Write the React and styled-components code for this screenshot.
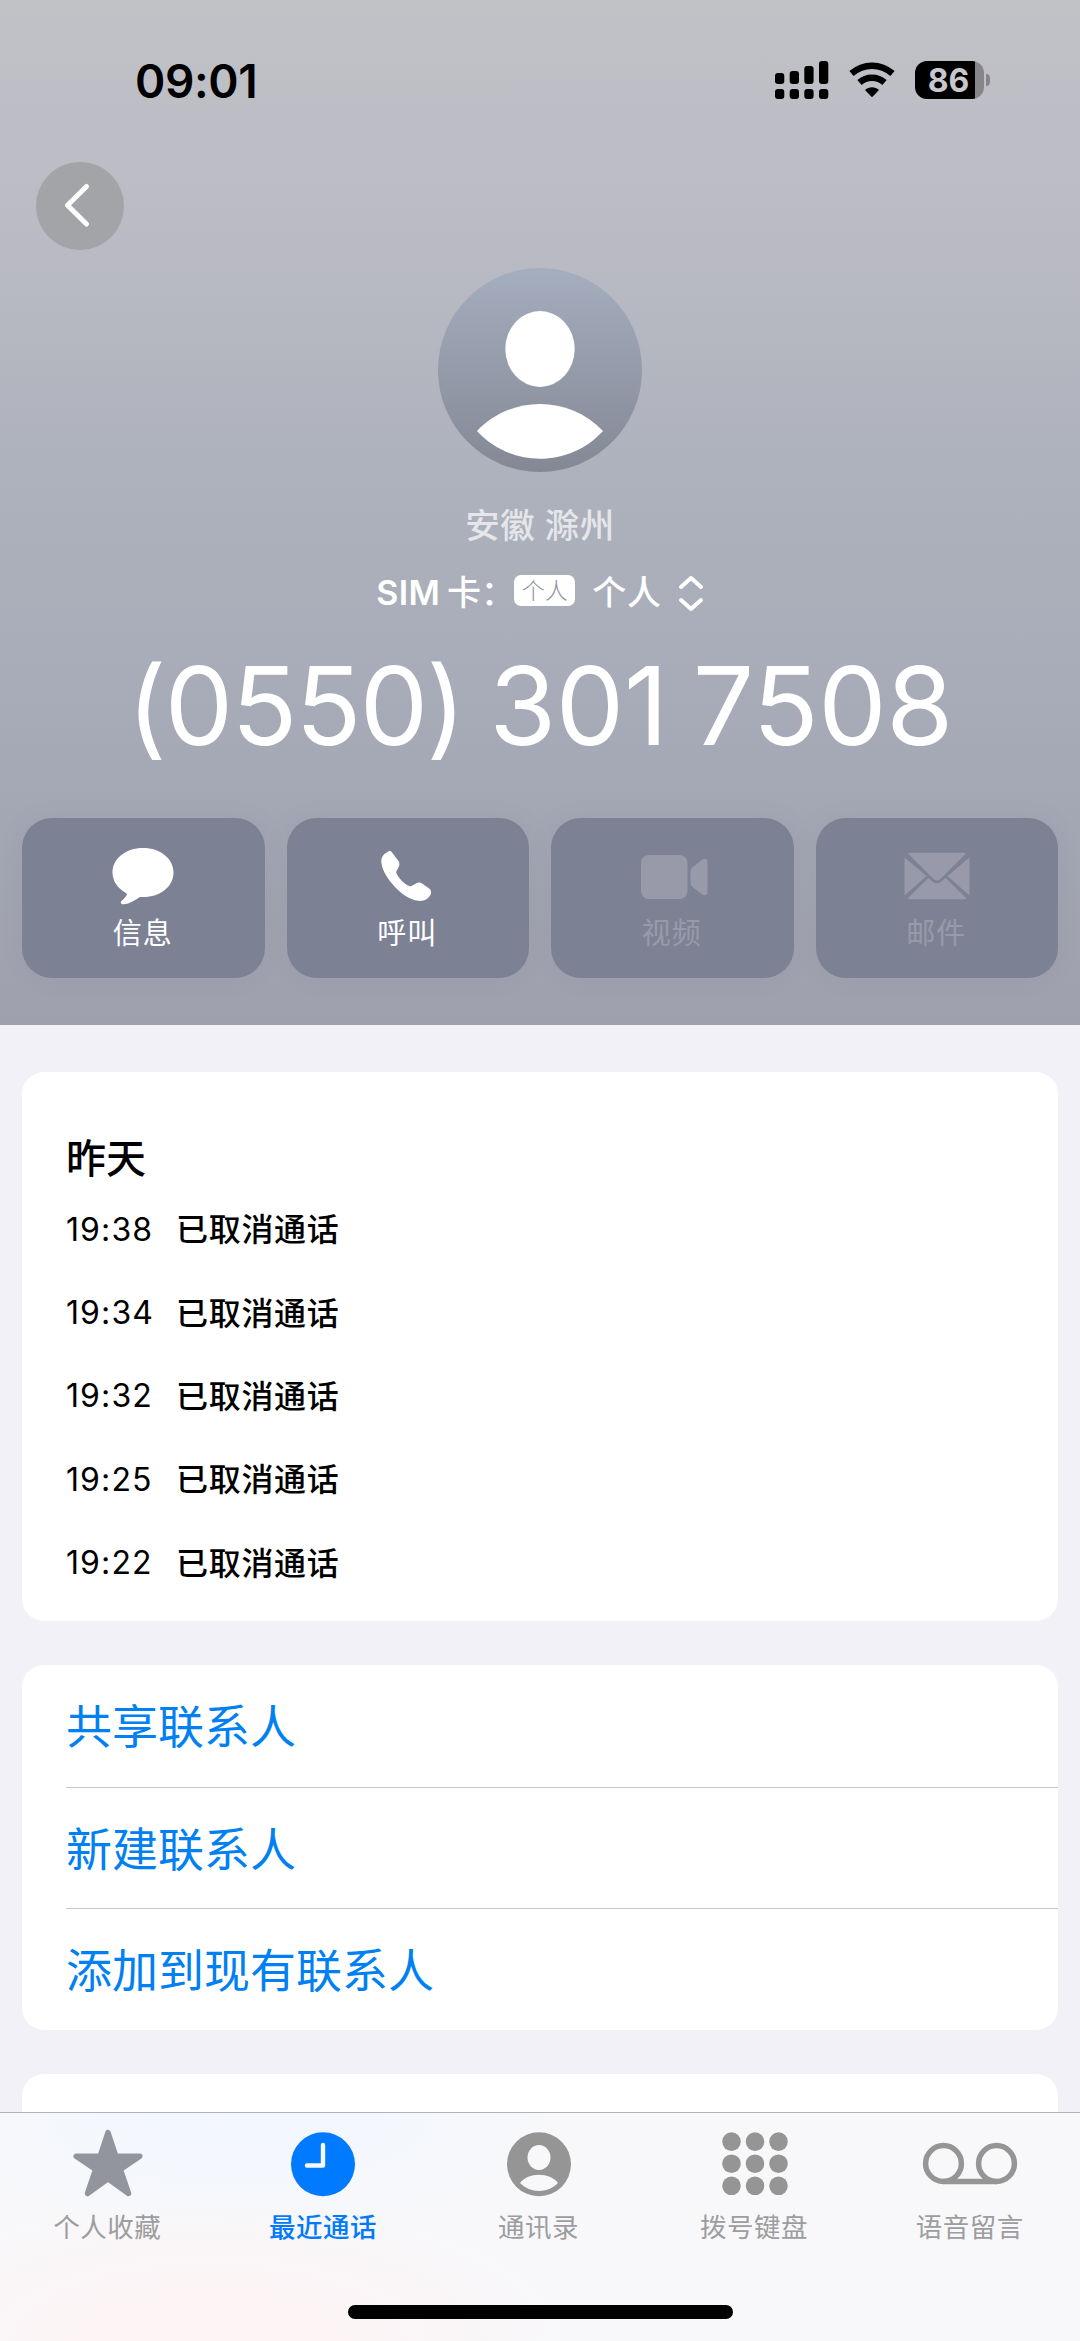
import React from 'react';
import styled, { createGlobalStyle } from 'styled-components';

const GlobalStyle = createGlobalStyle`
  * {
    box-sizing: border-box;
  }
  body {
    margin: 0;
    background-color: #f2f1f8;
    font-family: Inter, 'Noto Sans CJK SC', sans-serif;
  }
  svg {
    display: block;
    flex-shrink: 0;
  }
`;

const Screen = styled.div`
  display: flex;
  flex-direction: column;
  width: 1080px;
  height: 2341px;
  overflow: hidden;
  background-color: #f2f1f8;
`;
const Content = styled.div`
  flex: 1;
  min-height: 0;
  overflow: hidden;
`;

const Header = styled.div`
  display: flex;
  flex-direction: column;
  height: 1025px;
  color: #fff;
  background: linear-gradient(#c1c2c6 0, #b9bac4 250px, #adb1bb 490px, #a9adb9 650px, #a2a5b2 850px, #9fa0ad 1025px);
`;
const StatusBar = styled.div`
  display: flex;
  justify-content: space-between;
  align-items: center;
  height: 162px;
  padding: 0 90px 0 135px;
  color: #000;
`;
const Clock = styled.div`
  font-size: 46px;
  font-weight: 600;
  line-height: 56px;
  letter-spacing: -0.4px;
`;
const StatusIcons = styled.div`
  display: flex;
  align-items: center;
  height: 40px;
  margin-bottom: 2px;
`;
const Signal = styled.svg`
  width: 54px;
  height: 38px;
  margin-right: 19px;
`;
const Wifi = styled.svg`
  width: 48px;
  height: 38px;
  margin-right: 19px;
`;
const Battery = styled.div`
  width: 69px;
  height: 38px;
  padding-right: 2px;
  border-radius: 12px;
  color: #c8c8cc;
  background: linear-gradient(90deg, #000 60px, #85858a 60px);
  font-size: 32px;
  font-weight: 700;
  line-height: 39px;
  text-align: center;
`;
const BatteryCap = styled.div`
  width: 4px;
  height: 12px;
  margin-left: 2px;
  border-radius: 0 4px 4px 0;
  background-color: #85858a;
`;

const BackButton = styled.div`
  display: flex;
  width: 88px;
  height: 88px;
  margin-left: 36px;
  border-radius: 50%;
  background-color: #a3a4a8;
`;
const Profile = styled.div`
  display: flex;
  flex-direction: column;
  align-items: center;
`;
const Avatar = styled.svg`
  width: 204px;
  height: 204px;
  margin-top: 18px;
`;
const Region = styled.div`
  margin-top: 32px;
  color: #e4e6eb;
  font-size: 34.5px;
  line-height: 44px;
  font-weight: 500;
  letter-spacing: 0.5px;
`;
const SimRow = styled.div`
  display: flex;
  align-items: center;
  height: 44px;
  margin-top: 23px;
  font-size: 34px;
  font-weight: 500;
  line-height: 44px;
`;
const SimLabel = styled.span`
  display: flex;
  width: 138px;
  gap: 7px;
`;
const SimText = styled.span`
  font-weight: 600;
  letter-spacing: 0.3px;
`;
const SimBadge = styled.span`
  width: 61px;
  height: 31px;
  margin-bottom: 5px;
  border-radius: 7px;
  background-color: #fff;
  color: #8e919b;
  font-size: 23px;
  font-weight: 300;
  line-height: 33px;
  text-align: center;
`;
const SimName = styled.span`
  margin: 0 16px 0 17px;
  letter-spacing: 0.7px;
`;
const PhoneNumber = styled.div`
  margin-top: 36px;
  font-size: 108.5px;
  line-height: 110px;
  letter-spacing: -0.4px;
  word-spacing: -5px;
  white-space: nowrap;
`;
const AreaCode = styled.span`
  letter-spacing: -1.8px;
`;

const Actions = styled.div`
  display: grid;
  grid-template-columns: repeat(4, 1fr);
  gap: 22px;
  margin-top: 57px;
  padding: 0 22px;
`;
const Action = styled.div`
  display: flex;
  flex-direction: column;
  align-items: center;
  height: 160px;
  padding-top: 26px;
  border-radius: 30px;
  background-color: #7d8194;
  color: ${(props) => (props.$disabled ? '#989aaa' : '#fff')};
  box-shadow: 0 0 20px rgba(125, 129, 148, 0.15);
  svg {
    width: 68px;
    height: 64px;
  }
`;
const ActionLabel = styled.div`
  margin-top: 6px;
  padding-right: 1px;
  font-size: 29px;
  line-height: 40px;
  letter-spacing: 1px;
`;

const Card = styled.div`
  margin: ${(props) => props.$top}px 22px 0;
  height: ${(props) => props.$height}px;
  border-radius: 22px;
  background-color: #fff;
`;
const History = styled(Card)`
  padding: 60px 44px 0;
`;
const Day = styled.div`
  color: #000;
  font-size: 40px;
  font-weight: 500;
  line-height: 53px;
`;
const Call = styled.div`
  display: flex;
  align-items: center;
  height: 83.4px;
  color: #000;
  font-size: 32px;
  line-height: 44px;
  &:nth-child(2) {
    margin-top: 3px;
  }
`;
const CallTime = styled.span`
  width: 86px;
  font-size: 32px;
  letter-spacing: 1.1px;
`;
const CallStatus = styled.span`
  margin: 1px 0 0 24px;
  font-weight: 500;
  letter-spacing: 0.7px;
`;
const Option = styled.div`
  height: 121.7px;
  margin-left: 44px;
  color: #0080f2;
  font-size: 46px;
  line-height: 123px;
  & + & {
    border-top: 1px solid #c8c8ca;
  }
`;

const TabBar = styled.div`
  display: flex;
  flex-direction: column;
  align-items: center;
  height: 229px;
  border-top: 1px solid #b2b2b7;
  background:
    radial-gradient(ellipse 330px 130px at 240px 0, #f1f7ff, rgba(241, 247, 255, 0)),
    radial-gradient(ellipse 380px 150px at 210px 229px, #fef3f4, rgba(254, 243, 244, 0)),
    #f8f8fa;
`;
const Tabs = styled.div`
  display: grid;
  grid-template-columns: repeat(5, 215.6px);
  width: 1080px;
  height: 192px;
`;
const Tab = styled.div`
  display: flex;
  flex-direction: column;
  align-items: center;
  color: ${(props) => (props.$active ? '#007aff' : '#959595')};
  svg {
    height: 72px;
    margin-top: 15px;
  }
`;
const TabLabel = styled.div`
  margin-top: 11px;
  padding-right: 1px;
  color: ${(props) => (props.$active ? '#007aff' : '#9d9da0')};
  font-size: 26.5px;
  font-weight: ${(props) => (props.$active ? 500 : 400)};
  line-height: 32px;
  letter-spacing: 0.5px;
`;
const HomeIndicator = styled.div`
  width: 385px;
  height: 14px;
  border-radius: 7px;
  background-color: #000;
`;

const MessageIcon = () => (
  <svg viewBox="0 0 68 64" fill="currentColor">
    <path d="M34 4C51 4 64.500 14.500 64.500 28.500C64.500 42.500 51.500 53 34 53L31 53C26.500 55.500 21 60 14.500 60.300C12 60.300 11 58.500 12.500 57C15 55 17 52.500 18 50.500C17.800 49.800 17.500 49.200 16.500 48.700C8.500 44 3.500 37 3.500 28.500C3.500 14.500 17 4 34 4Z" />
  </svg>
);
const CallIcon = () => (
  <svg viewBox="2 0 68 64" fill="currentColor">
    <path d="M15 8.500C16.500 6.800 18.500 6.500 20 8.500C22.500 11.500 24.500 14.500 26.500 17C28 19.500 27.500 21.500 26.200 24L24.500 27C24 28 24.200 29 25 30.500C28.500 36.500 33.500 40.500 37 42C38 42.400 39 42.300 40 41.800L44 39.500C46 38.400 48 38.200 50 39.600L56.500 44C59 45.700 59.600 47.500 58.800 50C56.500 55.500 51.500 57.500 46 56.800C38 56 27.500 49 20 39.500C13.500 32 9.300 23.500 9.300 17C9.300 13 12 9.500 15 8.500Z" />
  </svg>
);
const VideoIcon = () => (
  <svg viewBox="0 0 68 64" fill="currentColor" overflow="visible">
    <rect x="3" y="11" width="46.500" height="44" rx="8" />
    <path d="M52.500 28C52.500 26 53 24.500 54.500 23.200L64 15.800C67 13.800 69.500 15 69.500 17.800V48.500C69.500 51 67 52.300 64 50.300L54.500 43C53 41.700 52.500 40 52.500 38Z" />
  </svg>
);
const MailIcon = () => (
  <svg viewBox="0 0 68 64" fill="currentColor">
    <path d="M5 9.500C6 9 7 8.700 8.500 8.700H59.500C61 8.700 62 9 63 9.500L38 34.500C35.300 37 32.700 37 30 34.500Z" />
    <path d="M1.500 13.500L23.500 32L1.500 51.500Z" />
    <path d="M66.500 13.500V51.500L44.500 32Z" />
    <path d="M4.500 54.500L25.500 33.800L28.500 36.800C32 40 36 40 39.500 36.800L42.500 33.800L63.500 54.500C62.500 55.100 61 55.300 59.500 55.300H8.500C7 55.300 5.500 55.100 4.500 54.500Z" />
  </svg>
);

const StarIcon = () => (
  <svg width="72" viewBox="0 0 72 72" fill="#92959d">
    <path
      d="M36 4.500L43.800 28.200H67.800L48.300 41.500L56.500 65.500L36 50.800L15.500 65.500L23.700 41.500L4.200 28.200H28.200Z"
      stroke="#92959d"
      strokeWidth="5.500"
      strokeLinejoin="round"
    />
  </svg>
);
const RecentIcon = () => (
  <svg width="72" viewBox="0 0 72 72" fill="none">
    <circle cx="36" cy="36.300" r="32" fill="currentColor" />
    <path d="M36 17V37.500H20" stroke="#f6faff" strokeWidth="4.400" strokeLinecap="round" strokeLinejoin="round" />
  </svg>
);
const ContactIcon = () => (
  <svg width="72" viewBox="0 0 72 72">
    <circle cx="36" cy="36.300" r="32" fill="currentColor" />
    <ellipse cx="36" cy="29.500" rx="11.500" ry="12.500" fill="#f8f8fb" />
    <path d="M17 55C25 44 47 44 55 55C45 65.500 27 65.500 17 55Z" fill="#f8f8fb" />
  </svg>
);
const KeypadIcon = () => (
  <svg width="72" viewBox="0 0 72 72" fill="currentColor">
    {[12.5, 36, 59.5].map((x) => [13.6, 35.7, 57.8].map((y) => <circle key={`${x}-${y}`} cx={x} cy={y} r="9.3" />))}
  </svg>
);
const VoicemailIcon = () => (
  <svg width="100" viewBox="0 0 100 72" fill="none" stroke="currentColor" strokeWidth="5.500">
    <circle cx="23.500" cy="35.500" r="17.900" />
    <circle cx="76.500" cy="35.500" r="17.900" />
    <path d="M23.500 53.400H76.500" />
  </svg>
);

const actions = [
  { label: '信息', icon: MessageIcon },
  { label: '呼叫', icon: CallIcon },
  { label: '视频', icon: VideoIcon, disabled: true },
  { label: '邮件', icon: MailIcon, disabled: true },
];
const calls = ['19:38', '19:34', '19:32', '19:25', '19:22'];
const options = ['共享联系人', '新建联系人', '添加到现有联系人'];
const tabs = [
  { label: '个人收藏', icon: StarIcon },
  { label: '最近通话', icon: RecentIcon, active: true },
  { label: '通讯录', icon: ContactIcon },
  { label: '拨号键盘', icon: KeypadIcon },
  { label: '语音留言', icon: VoicemailIcon },
];

const App = () => {
  return (
    <Screen lang="zh-CN">
      <GlobalStyle />
      <Content>
        <Header>
          <StatusBar>
            <Clock>09:01</Clock>
            <StatusIcons>
              <Signal viewBox="0 0 54 38">
                <rect x="0" y="12" width="9.300" height="11" rx="3" />
                <rect x="14.700" y="10" width="9.300" height="13" rx="3" />
                <rect x="29.300" y="5" width="9.300" height="18" rx="3" />
                <rect x="44" y="0" width="9.300" height="23" rx="3" />
                <rect x="0" y="28" width="9.300" height="10" rx="3" />
                <rect x="14.700" y="28" width="9.300" height="10" rx="3" />
                <rect x="29.300" y="28" width="9.300" height="10" rx="3" />
                <rect x="44" y="28" width="9.300" height="10" rx="3" />
              </Signal>
              <Wifi viewBox="0 0 48 38">
                <path d="M3.500 12.500C15.500 2 32.500 2 44.500 12.500" fill="none" stroke="#000" strokeWidth="6.500" />
                <path d="M11.500 21.500C18.500 15.200 29.500 15.200 36.500 21.500" fill="none" stroke="#000" strokeWidth="6.500" />
                <path d="M17 29C21 25.300 27 25.300 31 29L24.800 35.600C24.300 36.100 23.700 36.100 23.200 35.600Z" />
              </Wifi>
              <Battery>86</Battery>
              <BatteryCap />
            </StatusIcons>
          </StatusBar>
          <BackButton>
            <svg width="88" height="88" fill="none" stroke="#fff" strokeWidth="5" strokeLinecap="round" strokeLinejoin="round">
              <path d="M50.500 24.500L31.500 43.200L50.500 62" />
            </svg>
          </BackButton>
          <Profile>
            <Avatar viewBox="0 0 204 204">
              <defs>
                <linearGradient id="avatar" x1="0" y1="0" x2="0" y2="1">
                  <stop offset="0" stopColor="#a5aebf" />
                  <stop offset="1" stopColor="#838894" />
                </linearGradient>
              </defs>
              <circle cx="102" cy="102" r="102" fill="url(#avatar)" />
              <ellipse cx="102" cy="81" rx="34.700" ry="38" fill="#fff" />
              <path d="M39 163C73 127 131 127 165 163C131 200 73 200 39 163Z" fill="#fff" />
            </Avatar>
            <Region>安徽 滁州</Region>
            <SimRow>
              <SimLabel>
                <SimText>SIM</SimText>
                <span>卡：</span>
              </SimLabel>
              <SimBadge>个人</SimBadge>
              <SimName>个人</SimName>
              <svg width="26" height="40" fill="none" stroke="#fff" strokeWidth="4" strokeLinecap="round" strokeLinejoin="round">
                <path d="M3 14L13 5L23 14M3 27L13 36L23 27" />
              </svg>
            </SimRow>
            <PhoneNumber>
              <AreaCode>(0550)</AreaCode> 301 7508
            </PhoneNumber>
          </Profile>
          <Actions>
            {actions.map(({ label, icon: Icon, disabled }) => (
              <Action key={label} $disabled={disabled}>
                <Icon />
                <ActionLabel>{label}</ActionLabel>
              </Action>
            ))}
          </Actions>
        </Header>
        <History $top={47} $height={549}>
          <Day>昨天</Day>
          {calls.map((time) => (
            <Call key={time}>
              <CallTime>{time}</CallTime>
              <CallStatus>已取消通话</CallStatus>
            </Call>
          ))}
        </History>
        <Card $top={44} $height={365}>
          {options.map((option) => (
            <Option key={option}>{option}</Option>
          ))}
        </Card>
        <Card $top={44} $height={365} />
      </Content>
      <TabBar>
        <Tabs>
          {tabs.map(({ label, icon: Icon, active }) => (
            <Tab key={label} $active={active}>
              <Icon />
              <TabLabel $active={active}>{label}</TabLabel>
            </Tab>
          ))}
        </Tabs>
        <HomeIndicator />
      </TabBar>
    </Screen>
  );
};

export default App;
